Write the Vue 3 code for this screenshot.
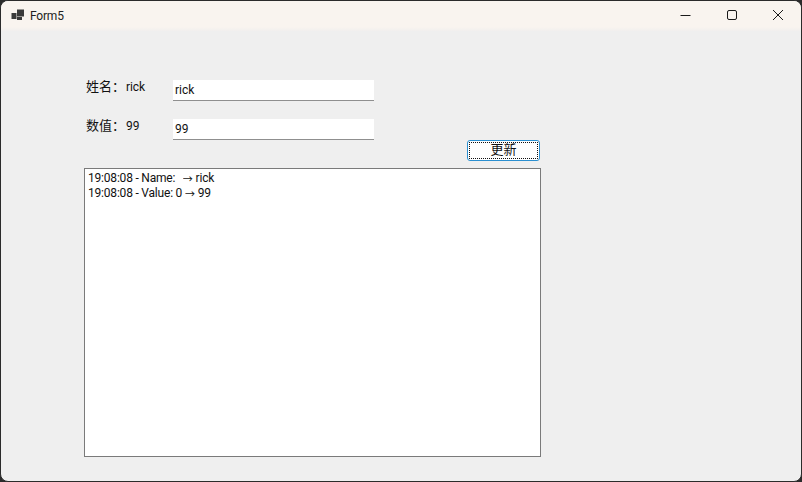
<script setup>
const log = [
  { time: '19:08:08 - Name:  ', to: ' rick', gap: 2 },
  { time: '19:08:08 - Value: 0 ', to: ' 99', gap: 0 }
]
const rows = [
  { label: '姓名：', value: 'rick' },
  { label: '数值：', value: '99' }
]
</script>

<template>
  <div class="window">
    <header class="titlebar">
      <svg class="app-icon" width="14" height="12" viewBox="0 0 14 12">
        <rect x="0.5" y="4" width="5" height="6" fill="#3a3a3a" />
        <rect x="6" y="0.5" width="7" height="7" fill="#3a3a3a" />
        <rect x="6" y="8" width="5" height="3" fill="#3a3a3a" />
      </svg>
      <span class="title">Form5</span>
      <div class="controls">
        <svg width="12" height="12" viewBox="0 0 12 12"><path d="M0.5 6.5H10.5" stroke="#1a1a1a" fill="none" /></svg>
        <svg width="12" height="12" viewBox="0 0 12 12"><rect x="1.5" y="1.5" width="9" height="9" rx="1.5" stroke="#1a1a1a" fill="none" /></svg>
        <svg width="12" height="12" viewBox="0 0 12 12"><path d="M1 1L11 11M11 1L1 11" stroke="#1a1a1a" fill="none" /></svg>
      </div>
    </header>
    <main class="content">
      <div v-for="row in rows" :key="row.label" class="row">
        <div class="label"><span class="cjk">{{ row.label }}</span><span class="val">{{ row.value }}</span></div>
        <input class="field" :value="row.value" readonly />
      </div>
      <div class="actions"><button class="update" type="button"><span class="focus">更新</span></button></div>
      <div class="log">
        <div v-for="line in log" :key="line.time">{{ line.time }}<span class="arrow" :style="{ marginLeft: line.gap + 'px' }">→</span>{{ line.to }}</div>
      </div>
    </main>
  </div>
</template>

<style>
html, body { margin: 0; background: #2b2b2b; }
</style>

<style scoped>
.window {
  width: 802px;
  height: 482px;
  box-sizing: border-box;
  border: 1px solid #2b2b2b;
  border-radius: 8px;
  background: #efefef;
  overflow: hidden;
  font-family: Roboto, "Noto Sans CJK SC", sans-serif;
  font-size: 12px;
  color: #111;
}
.titlebar {
  height: 30px;
  display: flex;
  align-items: center;
  padding-left: 10px;
  background: linear-gradient(#f9f4ef 0, #f9f4ef 26px, #f1efee 30px);
}
.app-icon { margin-right: 5px; margin-top: -2px; }
.title { color: #222; margin-top: -1px; letter-spacing: -0.2px; }
.controls {
  margin-left: auto;
  display: flex;
  gap: 34px;
  padding-right: 17px;
  margin-top: -2px;
}
.content { padding: 49px 0 0 83px; }
.row {
  display: flex;
  height: 21px;
  margin-bottom: 18px;
}
.label {
  width: 89px;
  padding-left: 2px;
  box-sizing: border-box;
  margin-top: -2px;
  line-height: 18px;
}
.cjk { font-size: 13px; }
.val { margin-left: 1px; letter-spacing: -0.1px; }
.field {
  width: 201px;
  height: 21px;
  box-sizing: border-box;
  border: 0;
  border-bottom: 1px solid #8f8f8f;
  padding: 0 2px 1px;
  background: #fff;
  font: inherit;
  color: inherit;
  outline: none;
}
.actions {
  width: 456px;
  display: flex;
  justify-content: flex-end;
  margin-top: -18px;
}
.update {
  width: 73px;
  height: 21px;
  padding: 1px;
  border: 1px solid #2b8fd0;
  border-radius: 3px;
  background: #fff;
  font-size: 13px;
  font-family: inherit;
  color: #111;
}
.focus {
  display: block;
  height: 100%;
  line-height: 13px;
  box-sizing: border-box;
  border: 1px dotted #111;
}
.log {
  width: 457px;
  height: 289px;
  box-sizing: border-box;
  margin-top: 7px;
  border: 1px solid #7a7a7a;
  background: #fff;
  padding: 2px 3px;
  line-height: 15px;
  white-space: pre;
  letter-spacing: -0.2px;
}
.arrow {
  display: inline-block;
  width: 10px;
  font-size: 10px;
  line-height: 10px;
  overflow: hidden;
  vertical-align: -3px;
}
</style>
